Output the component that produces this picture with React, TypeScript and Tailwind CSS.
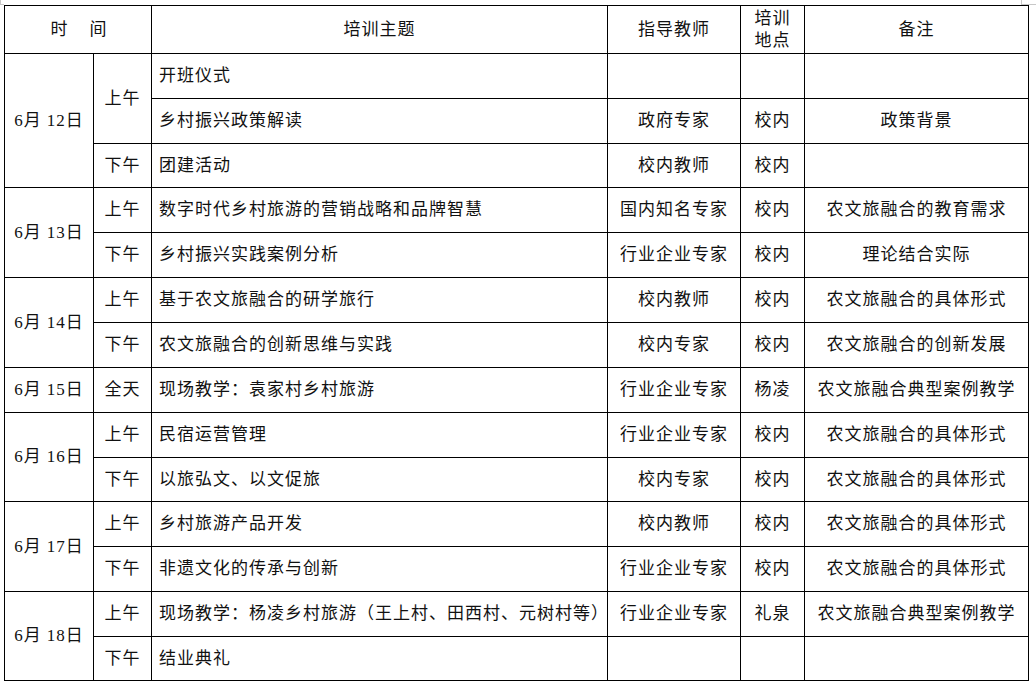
import React from "react";

type Row = {
  date?: string;
  dateSpan?: number;
  period?: string;
  periodSpan?: number;
  topic: string;
  teacher: string;
  place: string;
  note: string;
  h: number;
};

const rows: Row[] = [
  { date: "6月 12日", dateSpan: 3, period: "上午", periodSpan: 2, topic: "开班仪式", teacher: "", place: "", note: "", h: 45 },
  { topic: "乡村振兴政策解读", teacher: "政府专家", place: "校内", note: "政策背景", h: 45 },
  { period: "下午", periodSpan: 1, topic: "团建活动", teacher: "校内教师", place: "校内", note: "", h: 44 },
  { date: "6月 13日", dateSpan: 2, period: "上午", periodSpan: 1, topic: "数字时代乡村旅游的营销战略和品牌智慧", teacher: "国内知名专家", place: "校内", note: "农文旅融合的教育需求", h: 45 },
  { period: "下午", periodSpan: 1, topic: "乡村振兴实践案例分析", teacher: "行业企业专家", place: "校内", note: "理论结合实际", h: 45 },
  { date: "6月 14日", dateSpan: 2, period: "上午", periodSpan: 1, topic: "基于农文旅融合的研学旅行", teacher: "校内教师", place: "校内", note: "农文旅融合的具体形式", h: 45 },
  { period: "下午", periodSpan: 1, topic: "农文旅融合的创新思维与实践", teacher: "校内专家", place: "校内", note: "农文旅融合的创新发展", h: 45 },
  { date: "6月 15日", dateSpan: 1, period: "全天", periodSpan: 1, topic: "现场教学：袁家村乡村旅游", teacher: "行业企业专家", place: "杨凌", note: "农文旅融合典型案例教学", h: 45 },
  { date: "6月 16日", dateSpan: 2, period: "上午", periodSpan: 1, topic: "民宿运营管理", teacher: "行业企业专家", place: "校内", note: "农文旅融合的具体形式", h: 45 },
  { period: "下午", periodSpan: 1, topic: "以旅弘文、以文促旅", teacher: "校内专家", place: "校内", note: "农文旅融合的具体形式", h: 44 },
  { date: "6月 17日", dateSpan: 2, period: "上午", periodSpan: 1, topic: "乡村旅游产品开发", teacher: "校内教师", place: "校内", note: "农文旅融合的具体形式", h: 45 },
  { period: "下午", periodSpan: 1, topic: "非遗文化的传承与创新", teacher: "行业企业专家", place: "校内", note: "农文旅融合的具体形式", h: 45 },
  { date: "6月 18日", dateSpan: 2, period: "上午", periodSpan: 1, topic: "现场教学：杨凌乡村旅游（王上村、田西村、元树村等）", teacher: "行业企业专家", place: "礼泉", note: "农文旅融合典型案例教学", h: 45 },
  { period: "下午", periodSpan: 1, topic: "结业典礼", teacher: "", place: "", note: "", h: 44 },
];

const cell = "border border-black p-0 align-middle";

export default function App() {
  return (
    <div
      className="relative w-[1036px] h-[689px] bg-white text-[#111] text-[17px] tracking-[1px] leading-[22px]"
      style={{ fontFamily: '"Liberation Serif", "Noto Sans CJK SC", serif' }}
    >
      <div className="absolute left-0 top-0 w-px h-[5px] bg-[#c8c8c8]" />
      <div className="absolute left-0 top-[4px] w-[4px] h-px bg-[#c8c8c8]" />
      <div className="absolute left-[1021px] top-0 w-px h-[5px] bg-[#c8c8c8]" />
      <div className="absolute left-[1022px] top-[4px] w-[14px] h-px bg-[#c8c8c8]" />
      <div className="pt-[5px] pl-[4px]">
        <table className="table-fixed border-collapse w-[1024px]">
          <colgroup>
            <col className="w-[89px]" />
            <col className="w-[58px]" />
            <col className="w-[456px]" />
            <col className="w-[133px]" />
            <col className="w-[64px]" />
            <col className="w-[224px]" />
          </colgroup>
          <tbody>
            <tr>
              <td colSpan={2} className={`${cell} h-[48px] text-center`}>
                <div className="flex justify-center gap-[21px] pl-[2px]">
                  <span>时</span>
                  <span>间</span>
                </div>
              </td>
              <td className={`${cell} text-center`}>培训主题</td>
              <td className={`${cell} text-center`}>指导教师</td>
              <td className={`${cell} text-center`}>
                <div>培训</div>
                <div>地点</div>
              </td>
              <td className={`${cell} text-center`}>备注</td>
            </tr>
            {rows.map((r, i) => (
              <tr key={i}>
                {r.date && (
                  <td rowSpan={r.dateSpan} className={`${cell} text-center whitespace-nowrap`}>
                    {r.date}
                  </td>
                )}
                {r.period && (
                  <td rowSpan={r.periodSpan} className={`${cell} text-center`}>
                    {r.period}
                  </td>
                )}
                <td className={`${cell} pl-[7px] whitespace-nowrap`} style={{ height: r.h }}>
                  {r.topic}
                </td>
                <td className={`${cell} text-center whitespace-nowrap`}>{r.teacher}</td>
                <td className={`${cell} text-center whitespace-nowrap`}>{r.place}</td>
                <td className={`${cell} text-center whitespace-nowrap`}>{r.note}</td>
              </tr>
            ))}
          </tbody>
        </table>
      </div>
    </div>
  );
}
